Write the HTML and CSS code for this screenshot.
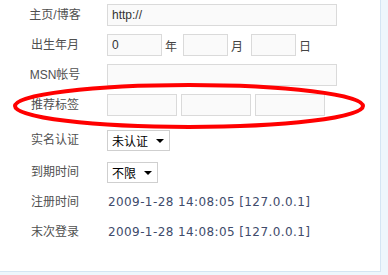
FILE: index.html
```html
<!DOCTYPE html>
<html lang="zh-CN">
<head>
<meta charset="utf-8">
<title>个人资料</title>
<link rel="stylesheet" href="styles.css">
</head>
<body>
<div class="panel">
  <div class="form">
    <div class="row">
      <div class="label">主页/博客</div>
      <div class="field"><input class="text wide" type="text" value="http://"></div>
    </div>
    <div class="row">
      <div class="label">出生年月</div>
      <div class="field">
        <input class="text year" type="text" value="0"><span class="unit">年</span>
        <input class="text short" type="text"><span class="unit unit-wide">月</span>
        <input class="text short" type="text"><span class="unit">日</span>
      </div>
    </div>
    <div class="row">
      <div class="label">MSN帐号</div>
      <div class="field"><input class="text wide" type="text"></div>
    </div>
    <div class="row">
      <div class="label">推荐标签</div>
      <div class="field tags">
        <input class="text tag" type="text">
        <input class="text tag" type="text">
        <input class="text tag" type="text">
      </div>
    </div>
    <div class="row row-gap5">
      <div class="label">实名认证</div>
      <div class="field">
        <span class="select sel-auth"><select><option>未认证</option></select></span>
      </div>
    </div>
    <div class="row row-gap2">
      <div class="label">到期时间</div>
      <div class="field">
        <span class="select sel-exp"><select><option>不限</option></select></span>
      </div>
    </div>
    <div class="row">
      <div class="label">注册时间</div>
      <div class="field value">2009-1-28 14:08:05 [127.0.0.1]</div>
    </div>
    <div class="row">
      <div class="label">末次登录</div>
      <div class="field value">2009-1-28 14:08:05 [127.0.0.1]</div>
    </div>
  </div>
  <svg class="mark" width="380" height="271" viewBox="0 0 380 271" aria-hidden="true">
    <ellipse cx="189" cy="106" rx="174" ry="21" fill="none" stroke="#ff0000" stroke-width="4"/>
  </svg>
</div>
</body>
</html>
```
FILE: styles.css
```css
html, body {
  margin: 0;
  padding: 0;
}
body {
  background: #eef6fc;
  font-family: "Liberation Sans", "Noto Sans CJK SC", sans-serif;
  font-size: 12px;
}
.panel {
  position: relative;
  width: 380px;
  height: 271px;
  background: #ffffff;
  border-right: 1px solid #d5e5f3;
  border-bottom: 1px solid #d5e5f3;
}
.form {
  display: flex;
  flex-direction: column;
  padding-left: 7px;
}
.row {
  display: grid;
  grid-template-columns: 96px 1fr;
  column-gap: 4px;
  height: 30px;
  align-items: center;
}
.row-gap5 { margin-top: 5px; }
.row-gap2 { margin-top: 2px; }
.label {
  text-align: center;
  color: #505050;
  font-family: "Liberation Sans", "Noto Sans CJK SC", sans-serif;
  font-size: 12px;
  line-height: 16px;
}
.field {
  display: flex;
  align-items: center;
}
.text {
  box-sizing: border-box;
  height: 22px;
  margin: 0;
  padding: 0 4px;
  border: 1px solid #dadada;
  background: #fafafa;
  font-family: "Liberation Sans", "Noto Sans CJK SC", sans-serif;
  font-size: 12px;
  color: #333333;
  outline: none;
}
.wide { width: 230px; }
.year { width: 55px; }
.short { width: 45px; }
.tag { width: 70px; }
.tags { gap: 4px; }
.unit {
  color: #444444;
  font-family: "Noto Sans CJK SC", sans-serif;
  font-size: 12px;
  padding: 0 6px 0 3px;
}
.unit-wide { padding-right: 8px; }
.select {
  position: relative;
  display: inline-block;
}
.select select {
  appearance: none;
  -webkit-appearance: none;
  box-sizing: border-box;
  height: 21px;
  margin: 0;
  padding: 0 0 0 4px;
  border: 1px solid #cfcfcf;
  border-radius: 0;
  background: #ffffff;
  color: #000000;
  font-family: "Noto Sans CJK SC", sans-serif;
  font-size: 12px;
  outline: none;
}
.sel-auth select { width: 63px; }
.sel-exp select { width: 51px; }
.select::after {
  content: "";
  position: absolute;
  right: 6px;
  top: 9px;
  width: 0;
  height: 0;
  border-left: 4px solid transparent;
  border-right: 4px solid transparent;
  border-top: 4px solid #000000;
  pointer-events: none;
}
.value {
  font-family: "DejaVu Sans", Verdana, sans-serif;
  font-size: 12px;
  letter-spacing: 0.4px;
  color: #404b6b;
  padding-left: 1px;
}
.mark {
  position: absolute;
  left: 0;
  top: 0;
  pointer-events: none;
}
```
